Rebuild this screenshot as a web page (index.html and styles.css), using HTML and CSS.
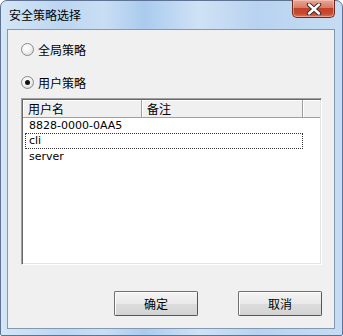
FILE: index.html
```html
<!DOCTYPE html>
<html lang="zh-CN">
<head>
    <meta charset="UTF-8">
    <title>安全策略选择</title>
    <link rel="stylesheet" href="styles.css">
</head>
<body>
    <div class="window">
        <div class="titlebar">
            <span class="title">安全策略选择</span>
            <div class="close-btn">
                <svg width="20" height="12" viewBox="0 0 20 12">
                    <path d="M5 1.5 L15 10.5 M15 1.5 L5 10.5" stroke="#3a2a2a" stroke-width="4.4" stroke-linecap="round"/>
                    <path d="M5 1.5 L15 10.5 M15 1.5 L5 10.5" stroke="#ffffff" stroke-width="2.4" stroke-linecap="round"/>
                </svg>
            </div>
        </div>

        <div class="client">
            <!-- 策略选择 -->
            <div class="radio-row first">
                <span class="radio"></span>
                <span class="radio-label">全局策略</span>
            </div>
            <div class="radio-row">
                <span class="radio checked"></span>
                <span class="radio-label">用户策略</span>
            </div>

            <!-- 用户列表 -->
            <div class="listview">
                <div class="lv-header">
                    <div class="lv-col col-name">用户名</div>
                    <div class="lv-col col-note">备注</div>
                    <div class="lv-col col-rest"></div>
                </div>
                <div class="lv-item">8828-0000-0AA5</div>
                <div class="lv-item focused">cli</div>
                <div class="lv-item">server</div>
            </div>

            <div class="buttons">
                <button type="button" class="btn">确定</button>
                <button type="button" class="btn">取消</button>
            </div>
        </div>
    </div>
</body>
</html>
```

FILE: styles.css
```css
html, body {
    margin: 0;
    padding: 0;
    background: #ffffff;
}

body {
    width: 343px;
    height: 336px;
    font-family: "Noto Sans CJK SC", "DejaVu Sans", sans-serif;
    font-size: 12px;
    color: #000;
}

.window {
    box-sizing: border-box;
    width: 343px;
    height: 336px;
    border: 1px solid #5e7393;
    border-radius: 7px 7px 2px 2px;
    background: linear-gradient(90deg, #d4e6f7 0%, #bcd6f1 18%, #c9def4 30%, #aacbee 42%, #cfe2f5 58%, #b8d3f0 75%, #c6dcf3 100%);
    padding: 0 7px 6px 6px;
    display: flex;
    flex-direction: column;
}

.titlebar {
    height: 28px;
    display: flex;
    align-items: flex-start;
    justify-content: space-between;
}

.title {
    margin-top: 6px;
    margin-left: 2px;
    line-height: 16px;
}

.close-btn {
    width: 43px;
    height: 18px;
    margin-top: -1px;
    margin-right: 0;
    box-sizing: border-box;
    border: 1px solid #6b2a20;
    border-top: none;
    border-radius: 0 0 5px 5px;
    background: linear-gradient(#e9a898 0%, #d97a64 45%, #c2412a 50%, #c94a30 80%, #d9765c 100%);
    box-shadow: inset 0 0 0 1px rgba(255, 210, 200, 0.5);
    display: flex;
    align-items: center;
    justify-content: center;
}

.client {
    flex: 1;
    background: #f0f0f0;
    border: 1px solid #8497b3;
    padding: 0 12px 0 13px;
    display: flex;
    flex-direction: column;
}

.radio-row {
    height: 15px;
    display: flex;
    align-items: center;
    margin-top: 18px;
}

.radio-row.first {
    margin-top: 12px;
}

.radio {
    box-sizing: border-box;
    width: 13px;
    height: 13px;
    border-radius: 50%;
    border: 1px solid #8a8a8a;
    background: radial-gradient(circle at 40% 35%, #ffffff 0%, #f2f2f2 45%, #cfcfcf 100%);
    position: relative;
}

.radio.checked::after {
    content: "";
    position: absolute;
    left: 3px;
    top: 3px;
    width: 5px;
    height: 5px;
    border-radius: 50%;
    background: #111;
}

.radio-label {
    margin-left: 4px;
    line-height: 15px;
}

.listview {
    margin-top: 8px;
    height: 167px;
    box-sizing: border-box;
    background: #fff;
    border-top: 1px solid #a0a0a0;
    border-left: 1px solid #a0a0a0;
    border-right: 1px solid #ffffff;
    border-bottom: 1px solid #ffffff;
    box-shadow: inset 1px 1px 0 #696969, inset -1px -1px 0 #e3e3e3;
    padding: 1px 1px 0 1px;
}

.lv-header {
    display: flex;
    height: 17px;
    background: #f0f0f0;
    border-bottom: 1px solid #a0a0a0;
}

.lv-col {
    box-sizing: border-box;
    height: 17px;
    line-height: 17px;
    border-right: 1px solid #a0a0a0;
    padding-left: 5px;
    box-shadow: inset 1px 1px 0 #ffffff;
}

.col-name {
    width: 119px;
}

.col-note {
    width: 161px;
}

.col-rest {
    flex: 1;
    border-right: none;
}

.lv-item {
    font-family: "DejaVu Sans", sans-serif;
    font-size: 11px;
    height: 15px;
    line-height: 15px;
    padding-left: 4px;
    margin-left: 2px;
    width: 278px;
    box-sizing: border-box;
}

.lv-item:first-of-type {
    margin-top: 2px;
}

.lv-item.focused {
    outline: 1px dotted #333;
    outline-offset: -1px;
    height: 16px;
}

.buttons {
    display: flex;
    justify-content: flex-end;
    gap: 40px;
    margin-top: 26px;
}

.btn {
    box-sizing: border-box;
    width: 84px;
    height: 25px;
    font-family: "Noto Sans CJK SC", sans-serif;
    font-size: 12px;
    color: #000;
    border: 1px solid #707070;
    border-right-color: #555;
    border-bottom-color: #555;
    border-radius: 2px;
    background: linear-gradient(#f4f4f4, #e9e9e9 50%, #dcdcdc 51%, #d4d4d4);
    box-shadow: inset 1px 1px 0 #fcfcfc;
    padding: 0;
}
```
